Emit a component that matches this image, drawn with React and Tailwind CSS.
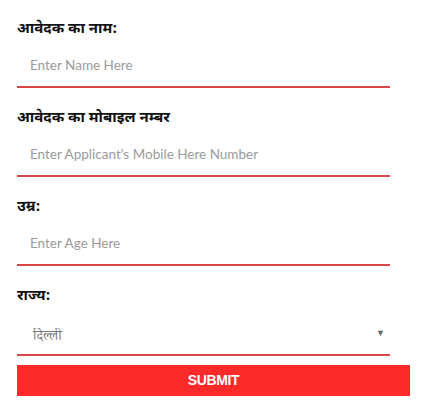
import React from 'react';

const labelFont = { fontFamily: '"Noto Sans Devanagari", "Noto Sans", "Liberation Sans", sans-serif' };

const Field = ({ label, placeholder }) => (
  <div className="mb-[21px]">
    <label className="block h-[20px] text-[15px] leading-[20px] font-bold text-[#111]" style={labelFont}>
      {label}
    </label>
    <input
      type="text"
      placeholder={placeholder}
      className="block w-[373px] h-[48px] border-b-2 border-[#d8474a] bg-white pl-[13px] pt-[4px] text-[13.5px] text-[#555] placeholder:text-[#9a9a9a] outline-none font-['Lato',sans-serif]"
    />
  </div>
);

export default function App() {
  return (
    <div className="min-h-[400px] bg-white px-[17px] pt-[20px]">
      <Field label="आवेदक का नाम:" placeholder="Enter Name Here" />
      <Field label="आवेदक का मोबाइल नम्बर" placeholder="Enter Applicant's Mobile Here Number" />
      <Field label="उम्र:" placeholder="Enter Age Here" />

      <div>
        <label className="block h-[20px] text-[15px] leading-[20px] font-bold text-[#111]" style={labelFont}>
          राज्य:
        </label>
        <div className="relative w-[373px]">
          <select
            defaultValue="delhi"
            className="block w-full h-[49px] appearance-none border-b-2 border-[#d8474a] bg-white pl-[16px] pt-[16px] text-[14px] text-[#777] outline-none"
            style={{ fontFamily: '"Noto Serif Devanagari", "Noto Sans Devanagari", serif' }}
          >
            <option value="delhi">दिल्ली</option>
          </select>
          <span className="pointer-events-none absolute right-[5px] top-[19px] text-[9px] text-[#666]">▼</span>
        </div>
      </div>

      <button className="mt-[9px] block w-[393px] h-[31px] bg-[#fd2a2a] text-white text-[14px] font-bold uppercase tracking-tight font-['Liberation_Sans',Arial,sans-serif]">
        Submit
      </button>
    </div>
  );
}
